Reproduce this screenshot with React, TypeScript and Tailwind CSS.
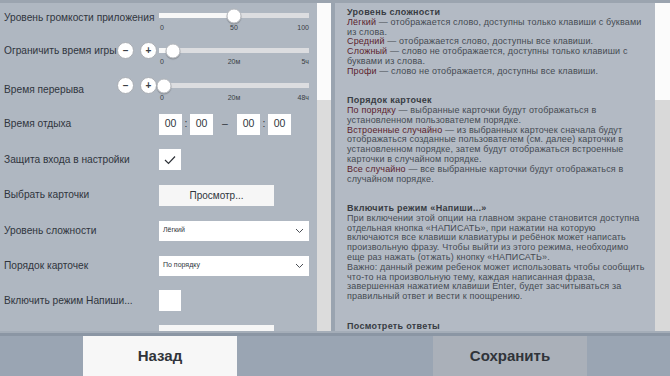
import React from "react";

const sans = "font-['Liberation_Sans','Arial',sans-serif]";

function Track({ pct }: { pct: number }) {
  return (
    <div className="relative h-[5px] w-[150px] bg-[#dcdde0]">
      <div className="absolute left-0 top-0 h-full bg-[#f7f7f7]" style={{ width: `${pct}%` }} />
      <div
        className="absolute top-1/2 h-[15px] w-[15px] -translate-x-1/2 -translate-y-1/2 rounded-full border border-[#b5b8bd] bg-white shadow-[0_1px_1px_rgba(0,0,0,0.2)]"
        style={{ left: `${pct}%` }}
      />
    </div>
  );
}

function Scale({ a, b, c }: { a: string; b: string; c: string }) {
  return (
    <div className="grid w-[150px] grid-cols-3 text-[7px] leading-[8px] text-[#3a3e45]">
      <span className="text-left pl-[1px]">{a}</span>
      <span className="text-center">{b}</span>
      <span className="text-right">{c}</span>
    </div>
  );
}

function RoundBtn({ sign }: { sign: string }) {
  return (
    <div className="flex h-[17px] w-[17px] items-center justify-center rounded-full border border-[#a9adb3] bg-white text-[10px] font-bold leading-none text-[#3a3e45]">
      {sign}
    </div>
  );
}

function Label({ children, className = "" }: { children: React.ReactNode; className?: string }) {
  return (
    <div className={`whitespace-nowrap text-[10.2px] leading-[14px] text-[#30353d] ${className}`}>{children}</div>
  );
}

function Box({ children }: { children: React.ReactNode }) {
  return (
    <div className="flex h-[21px] w-[23px] items-center justify-center bg-white text-[10.5px] text-[#30353d]">
      {children}
    </div>
  );
}

function Select({ value }: { value: string }) {
  return (
    <div className="flex h-[20px] w-[150px] items-center justify-between bg-white pl-[4px] pr-[5px] text-[7px] text-[#30353d]">
      <span>{value}</span>
      <svg width="9" height="6" viewBox="0 0 9 6" fill="none" stroke="#4a4e55" strokeWidth="1">
        <path d="M1 1l3.5 3.5L8 1" />
      </svg>
    </div>
  );
}

function T({ children }: { children: React.ReactNode }) {
  return <span className="text-[#5b1e2d]">{children}</span>;
}

function H({ children }: { children: React.ReactNode }) {
  return <div className="font-bold tracking-[0.3px] text-[#383c43]">{children}</div>;
}

export default function App() {
  return (
    <div className={`flex h-[376px] w-[670px] flex-col overflow-hidden bg-[#aeb6c0] ${sans}`}>
      <div className="h-[3px] bg-[#9ba4af]" />
      <div className="flex h-[328px]">
        {/* settings list */}
        <div className="w-[317px] overflow-hidden bg-[#afb7c1] pl-[4px]">
          <div className="flex h-[31px]">
            <Label className="w-[155px] pt-[8px]">Уровень громкости приложения</Label>
            <div className="pt-[10px]">
              <Track pct={50} />
              <div className="mt-[6px]">
                <Scale a="0" b="50" c="100" />
              </div>
            </div>
          </div>

          <div className="flex h-[36px]">
            <div className="relative w-[155px]">
              <Label className="pt-[10px]">Ограничить время игры</Label>
              <div className="absolute right-[2px] top-[8px] flex gap-[6px]">
                <RoundBtn sign="–" />
                <RoundBtn sign="+" />
              </div>
            </div>
            <div className="pt-[14px]">
              <Track pct={9} />
              <div className="mt-[5px]">
                <Scale a="0" b="20м" c="5ч" />
              </div>
            </div>
          </div>

          <div className="flex h-[36px]">
            <div className="relative w-[155px]">
              <Label className="pt-[13px]">Время перерыва</Label>
              <div className="absolute right-[2px] top-[7px] flex gap-[6px]">
                <RoundBtn sign="–" />
                <RoundBtn sign="+" />
              </div>
            </div>
            <div className="pt-[13px]">
              <Track pct={3} />
              <div className="mt-[6px]">
                <Scale a="0" b="20м" c="48ч" />
              </div>
            </div>
          </div>

          <div className="flex h-[36px] items-center">
            <Label className="w-[155px]">Время отдыха</Label>
            <div className="flex items-center text-[10.5px] text-[#30353d]">
              <Box>00</Box>
              <span className="w-[8px] text-center">:</span>
              <Box>00</Box>
              <span className="w-[24px] text-center">–</span>
              <Box>00</Box>
              <span className="w-[8px] text-center">:</span>
              <Box>00</Box>
            </div>
          </div>

          <div className="flex h-[35px] items-center">
            <Label className="w-[155px]">Защита входа в настройки</Label>
            <div className="flex h-[21px] w-[22px] items-center justify-center bg-white">
              <svg width="12" height="10" viewBox="0 0 12 10" fill="none" stroke="#2e3238" strokeWidth="1.2">
                <path d="M1 5l3.5 3.5L11 1.5" />
              </svg>
            </div>
          </div>

          <div className="flex h-[36px] items-center">
            <Label className="w-[155px]">Выбрать карточки</Label>
            <div className="flex h-[21px] w-[115px] items-center justify-center bg-[#f6f6f6] text-[10px] text-[#30353d]">
              Просмотр...
            </div>
          </div>

          <div className="flex h-[35px] items-center">
            <Label className="w-[155px]">Уровень сложности</Label>
            <Select value="Лёгкий" />
          </div>

          <div className="flex h-[35px] items-center">
            <Label className="w-[155px]">Порядок карточек</Label>
            <Select value="По порядку" />
          </div>

          <div className="flex h-[35px] items-center">
            <Label className="w-[155px]">Включить режим Напиши...</Label>
            <div className="h-[21px] w-[22px] bg-white" />
          </div>

          <div className="flex h-[35px] items-start pt-[7px]">
            <div className="w-[155px]" />
            <div className="h-[21px] w-[115px] bg-[#f6f6f6]" />
          </div>
        </div>

        {/* left scrollbar */}
        <div className="flex w-[14px] flex-col bg-[#dcdcdc]">
          <div className="h-[97px] bg-[#fbfbfb]" />
        </div>
        <div className="w-[4px] bg-[#9aa4b0]" />

        {/* help text */}
        <div className="w-[320px] overflow-hidden bg-[#b3bac4] pl-[12px] pt-[5px] text-[9px] leading-[9.8px] tracking-[0.15px] whitespace-nowrap text-[#454a52]">
          <H>Уровень сложности</H>
          <div>
            <T>Лёгкий</T> — отображается слово, доступны только клавиши с буквами
            <br />
            из слова.
            <br />
            <T>Средний</T> — отображается слово, доступны все клавиши.
            <br />
            <T>Сложный</T> — слово не отображается, доступны только клавиши с
            <br />
            буквами из слова.
            <br />
            <T>Профи</T> — слово не отображается, доступны все клавиши.
          </div>
          <div className="h-[19.6px]" />
          <H>Порядок карточек</H>
          <div>
            <T>По порядку</T> — выбранные карточки будут отображаться в
            <br />
            установленном пользователем порядке.
            <br />
            <T>Встроенные случайно</T> — из выбранных карточек сначала будут
            <br />
            отображаться созданные пользователем (см. далее) карточки в
            <br />
            установленном порядке, затем будут отображаться встроенные
            <br />
            карточки в случайном порядке.
            <br />
            <T>Все случайно</T> — все выбранные карточки будут отображаться в
            <br />
            случайном порядке.
          </div>
          <div className="h-[19.6px]" />
          <H>Включить режим «Напиши...»</H>
          <div>
            При включении этой опции на главном экране становится доступна
            <br />
            отдельная кнопка «НАПИСАТЬ», при нажатии на которую
            <br />
            включаются все клавиши клавиатуры и ребёнок может написать
            <br />
            произвольную фразу. Чтобы выйти из этого режима, необходимо
            <br />
            еще раз нажать (отжать) кнопку «НАПИСАТЬ».
            <br />
            Важно: данный режим ребенок может использовать чтобы сообщить
            <br />
            что-то на произвольную тему, каждая написанная фраза,
            <br />
            завершенная нажатием клавиши Enter, будет засчитываться за
            <br />
            правильный ответ и вести к поощрению.
          </div>
          <div className="h-[19.6px]" />
          <H>Посмотреть ответы</H>
          <div>В этом окне отображаются ответы ребёнка. На</div>
        </div>

        {/* right scrollbar */}
        <div className="flex w-[15px] flex-col bg-[#d9d9d9]">
          <div className="h-[97px] bg-[#fbfbfb]" />
        </div>
      </div>

      <div className="h-[2px] bg-[#a4adb8]" />
      <div className="h-[3px] bg-[#8b96a4]" />
      <div className="flex h-[40px] bg-[#9aa5b3]">
        <div className="w-[83px]" />
        <button className="flex w-[154px] items-center justify-center bg-[#f7f7f7] text-[15px] font-bold text-[#30343a]">
          Назад
        </button>
        <div className="w-[196px]" />
        <button className="flex w-[154px] items-center justify-center bg-[#aab0b9] text-[15px] font-bold text-[#30343a]">
          Сохранить
        </button>
      </div>
    </div>
  );
}
